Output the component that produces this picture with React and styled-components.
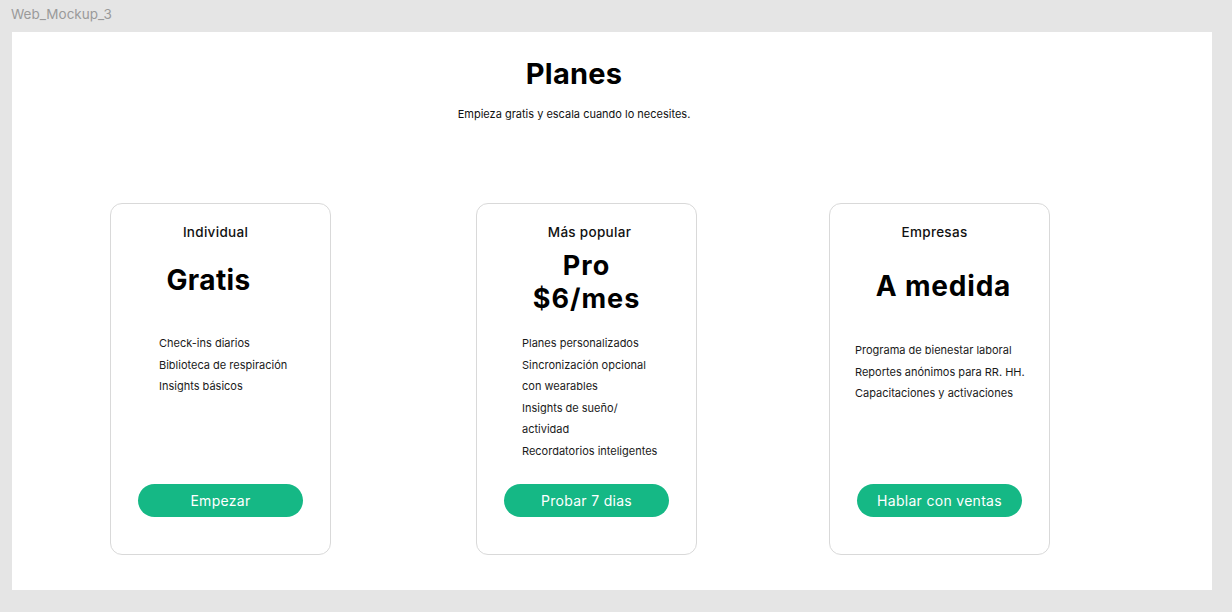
import React from "react";
import styled, { createGlobalStyle } from "styled-components";

const Global = createGlobalStyle`
  html, body { margin: 0; padding: 0; background: #e5e5e5; }
  body { font-family: Inter, "Noto Sans", sans-serif; }
  * { box-sizing: border-box; }
`;

const Page = styled.div`
  width: 1232px;
  height: 612px;
  background: #e5e5e5;
  overflow: hidden;
`;

const Label = styled.div`
  height: 32px;
  padding: 5px 0 0 11px;
  font-family: Inter, "Liberation Sans", sans-serif;
  font-size: 13.5px;
  color: #9a9a9a;
  line-height: 18px;
`;

const Frame = styled.main`
  margin-left: 12px;
  width: 1200px;
  height: 558px;
  background: #fff;
  display: flex;
  flex-direction: column;
  align-items: center;
`;

const Header = styled.header`
  width: 100%;
  display: flex;
  flex-direction: column;
  align-items: center;
  padding-top: 24px;
  padding-right: 76px;
`;

const Title = styled.h1`
  margin: 0;
  font-family: Inter, sans-serif;
  font-weight: 700;
  font-size: 29px;
  line-height: 36px;
  color: #000;
  letter-spacing: 0.2px;
`;

const Subtitle = styled.p`
  margin: 15px 0 0;
  font-size: 11px;
  line-height: 14px;
  color: #111;
`;

const Cards = styled.section`
  width: 100%;
  display: flex;
  align-items: flex-start;
  padding-left: 98px;
  margin-top: 82px;
`;

const Card = styled.article`
  width: 221px;
  height: 352px;
  margin-left: ${(p) => p.$gap}px;
  border: 1.5px solid #d9d9d9;
  border-radius: 12px;
  display: flex;
  flex-direction: column;
  padding: 19px 0 37px;
`;

const shift = (s) => `
  padding-left: ${Math.max(0, s * 2)}px;
  padding-right: ${Math.max(0, -s * 2)}px;
`;

const PlanName = styled.h3`
  margin: 0;
  text-align: center;
  font-family: Inter, sans-serif;
  font-weight: 500;
  font-size: 13.5px;
  line-height: 18px;
  letter-spacing: 0.3px;
  color: #111;
  ${(p) => shift(p.$shift)}
`;

const Price = styled.h2`
  margin: ${(p) => p.$top}px 0 0;
  text-align: center;
  font-family: Inter, sans-serif;
  font-weight: 700;
  font-size: ${(p) => p.$size}px;
  line-height: ${(p) => p.$lh}px;
  color: #000;
  letter-spacing: ${(p) => p.$ls}px;
  ${(p) => shift(p.$shift)}
`;

const Features = styled.ul`
  list-style: none;
  margin: ${(p) => p.$top}px 0 0;
  padding: 0 0 0 ${(p) => p.$left}px;
`;

const Feature = styled.li`
  font-size: 11px;
  line-height: 21.5px;
  color: #1a1a1a;
`;

const Button = styled.button`
  margin: auto auto 0;
  width: 165px;
  height: 33px;
  border: none;
  border-radius: 17px;
  background: #15b885;
  color: #fff;
  font-family: Inter, sans-serif;
  font-size: 14px;
  letter-spacing: 0.3px;
  font-weight: 400;
  cursor: pointer;
`;

const plans = [
  {
    gap: 0,
    name: "Individual",
    nameShift: -5,
    price: ["Gratis"],
    priceShift: -12,
    priceSize: 28,
    priceLh: 30,
    priceLs: 0.4,
    priceTop: 24,
    listTop: 38,
    listLeft: 48,
    features: ["Check-ins diarios", "Biblioteca de respiración", "Insights básicos"],
    cta: "Empezar",
  },
  {
    gap: 145,
    name: "Más popular",
    nameShift: 3,
    price: ["Pro", "$6/mes"],
    priceShift: 0,
    priceSize: 27,
    priceLh: 33,
    priceLs: 1,
    priceTop: 8,
    listTop: 18,
    listLeft: 45,
    features: [
      "Planes personalizados",
      "Sincronización opcional",
      "con wearables",
      "Insights de sueño/",
      "actividad",
      "Recordatorios inteligentes",
    ],
    cta: "Probar 7 dias",
  },
  {
    gap: 132,
    name: "Empresas",
    nameShift: -5,
    price: ["A medida"],
    priceShift: 4,
    priceSize: 28,
    priceLh: 32,
    priceLs: 0.8,
    priceTop: 29,
    listTop: 38,
    listLeft: 25,
    features: [
      "Programa de bienestar laboral",
      "Reportes anónimos para RR. HH.",
      "Capacitaciones y activaciones",
    ],
    cta: "Hablar con ventas",
  },
];

export default function App() {
  return (
    <>
      <Global />
      <Page>
        <Label>Web_Mockup_3</Label>
        <Frame>
          <Header>
            <Title>Planes</Title>
            <Subtitle>Empieza gratis y escala cuando lo necesites.</Subtitle>
          </Header>
          <Cards>
            {plans.map((p) => (
              <Card key={p.name} $gap={p.gap}>
                <PlanName $shift={p.nameShift}>{p.name}</PlanName>
                <Price
                  $shift={p.priceShift}
                  $size={p.priceSize}
                  $lh={p.priceLh}
                  $ls={p.priceLs}
                  $top={p.priceTop}
                >
                  {p.price.map((l, i) => (
                    <React.Fragment key={l}>
                      {i > 0 && <br />}
                      {l}
                    </React.Fragment>
                  ))}
                </Price>
                <Features $top={p.listTop} $left={p.listLeft}>
                  {p.features.map((f) => (
                    <Feature key={f}>{f}</Feature>
                  ))}
                </Features>
                <Button>{p.cta}</Button>
              </Card>
            ))}
          </Cards>
        </Frame>
      </Page>
    </>
  );
}
